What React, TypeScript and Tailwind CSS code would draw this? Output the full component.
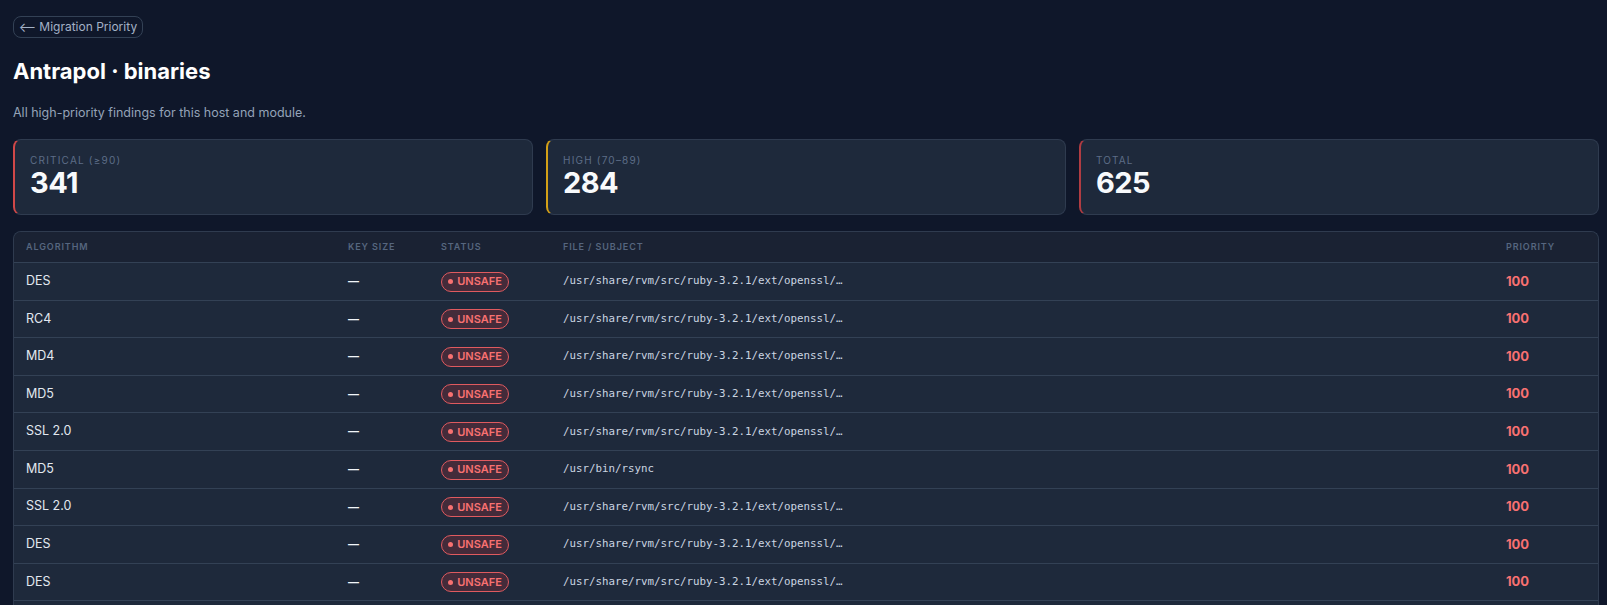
import React from "react";

type Finding = {
  algorithm: string;
  keySize: string;
  path: string;
  priority: number;
};

const OPENSSL = "/usr/share/rvm/src/ruby-3.2.1/ext/openssl/…";

const findings: Finding[] = [
  { algorithm: "DES", keySize: "—", path: OPENSSL, priority: 100 },
  { algorithm: "RC4", keySize: "—", path: OPENSSL, priority: 100 },
  { algorithm: "MD4", keySize: "—", path: OPENSSL, priority: 100 },
  { algorithm: "MD5", keySize: "—", path: OPENSSL, priority: 100 },
  { algorithm: "SSL 2.0", keySize: "—", path: OPENSSL, priority: 100 },
  { algorithm: "MD5", keySize: "—", path: "/usr/bin/rsync", priority: 100 },
  { algorithm: "SSL 2.0", keySize: "—", path: OPENSSL, priority: 100 },
  { algorithm: "DES", keySize: "—", path: OPENSSL, priority: 100 },
  { algorithm: "DES", keySize: "—", path: OPENSSL, priority: 100 },
  { algorithm: "RC4", keySize: "—", path: OPENSSL, priority: 100 },
];

const stats = [
  { label: "CRITICAL (≥90)", value: "341", stripe: "border-l-[#d04848]" },
  { label: "HIGH (70–89)", value: "284", stripe: "border-l-[#d4a017]" },
  { label: "TOTAL", value: "625", stripe: "border-l-[#b03c42]" },
];

const gridCols = "grid grid-cols-[322px_93px_122px_943px_1fr]";

function StatCard({ label, value, stripe }: { label: string; value: string; stripe: string }) {
  return (
    <div
      className={`rounded-lg border border-[#2f3b4f] border-l-2 ${stripe} bg-[#1e293b] pl-[15px] pt-[14px] pb-[16px]`}
    >
      <div className="text-[10px] leading-[12px] tracking-[0.12em] text-[#5d6d87]">{label}</div>
      <div className="mt-[2px] text-[29px] leading-[30px] font-bold tracking-[-0.02em] text-[#f8fafc]">
        {value}
      </div>
    </div>
  );
}

function UnsafeBadge() {
  return (
    <span className="inline-flex h-[20px] w-[68px] items-center justify-center gap-[4px] rounded-full border border-[#e05a5f] bg-[#442b3a] text-[11px] font-semibold text-[#f87171]">
      <span className="h-[5px] w-[5px] rounded-full bg-[#f87171]" />
      UNSAFE
    </span>
  );
}

export default function App() {
  return (
    <div
      className="min-h-screen bg-[#0f172a] pl-[13px] pr-[8px] pt-[16px] text-[#e2e8f0]"
      style={{ fontFamily: "Inter, 'Noto Sans', sans-serif" }}
    >
      <button className="flex h-[22px] w-[130px] items-center justify-center gap-[3px] rounded-lg border border-[#334155] text-[12px] text-[#a3b1c6]">
        <span className="text-[13px] leading-none">⟵</span>
        <span>Migration Priority</span>
      </button>

      <h1 className="mt-[19px] text-[22px] leading-[28px] font-bold text-white">Antrapol · binaries</h1>

      <p className="mt-[19px] text-[12.5px] leading-[18px] text-[#94a3b8]">
        All high-priority findings for this host and module.
      </p>

      <div className="mt-[17px] grid grid-cols-3 gap-[13px]">
        {stats.map((s) => (
          <StatCard key={s.label} {...s} />
        ))}
      </div>

      <div className="mt-[16px] overflow-hidden rounded-t-lg border border-b-0 border-[#2f3b4f] bg-[#1e293b]">
        <div
          className={`${gridCols} h-[30px] items-center bg-[#1a2233] text-[9px] font-semibold tracking-[0.1em] text-[#56667f]`}
        >
          <div className="px-3">ALGORITHM</div>
          <div className="px-3">KEY SIZE</div>
          <div className="px-3">STATUS</div>
          <div className="px-3">FILE / SUBJECT</div>
          <div className="px-3">PRIORITY</div>
        </div>
        {findings.map((f, i) => (
          <div
            key={i}
            className={`${gridCols} h-[37.6px] items-center border-t border-[#334155] text-[12.5px]`}
          >
            <div className="px-3 text-[#e2e8f0]">{f.algorithm}</div>
            <div className="px-3 text-[11px] font-bold text-[#f1f5f9]">{f.keySize}</div>
            <div className="px-3">
              <UnsafeBadge />
            </div>
            <div
              className="px-3 text-[10.8px] text-[#cbd5e1]"
              style={{ fontFamily: "'DejaVu Sans Mono', 'Liberation Mono', monospace" }}
            >
              {f.path}
            </div>
            <div className="px-3 text-[13px] font-bold text-[#f87171]">{f.priority}</div>
          </div>
        ))}
      </div>
    </div>
  );
}
